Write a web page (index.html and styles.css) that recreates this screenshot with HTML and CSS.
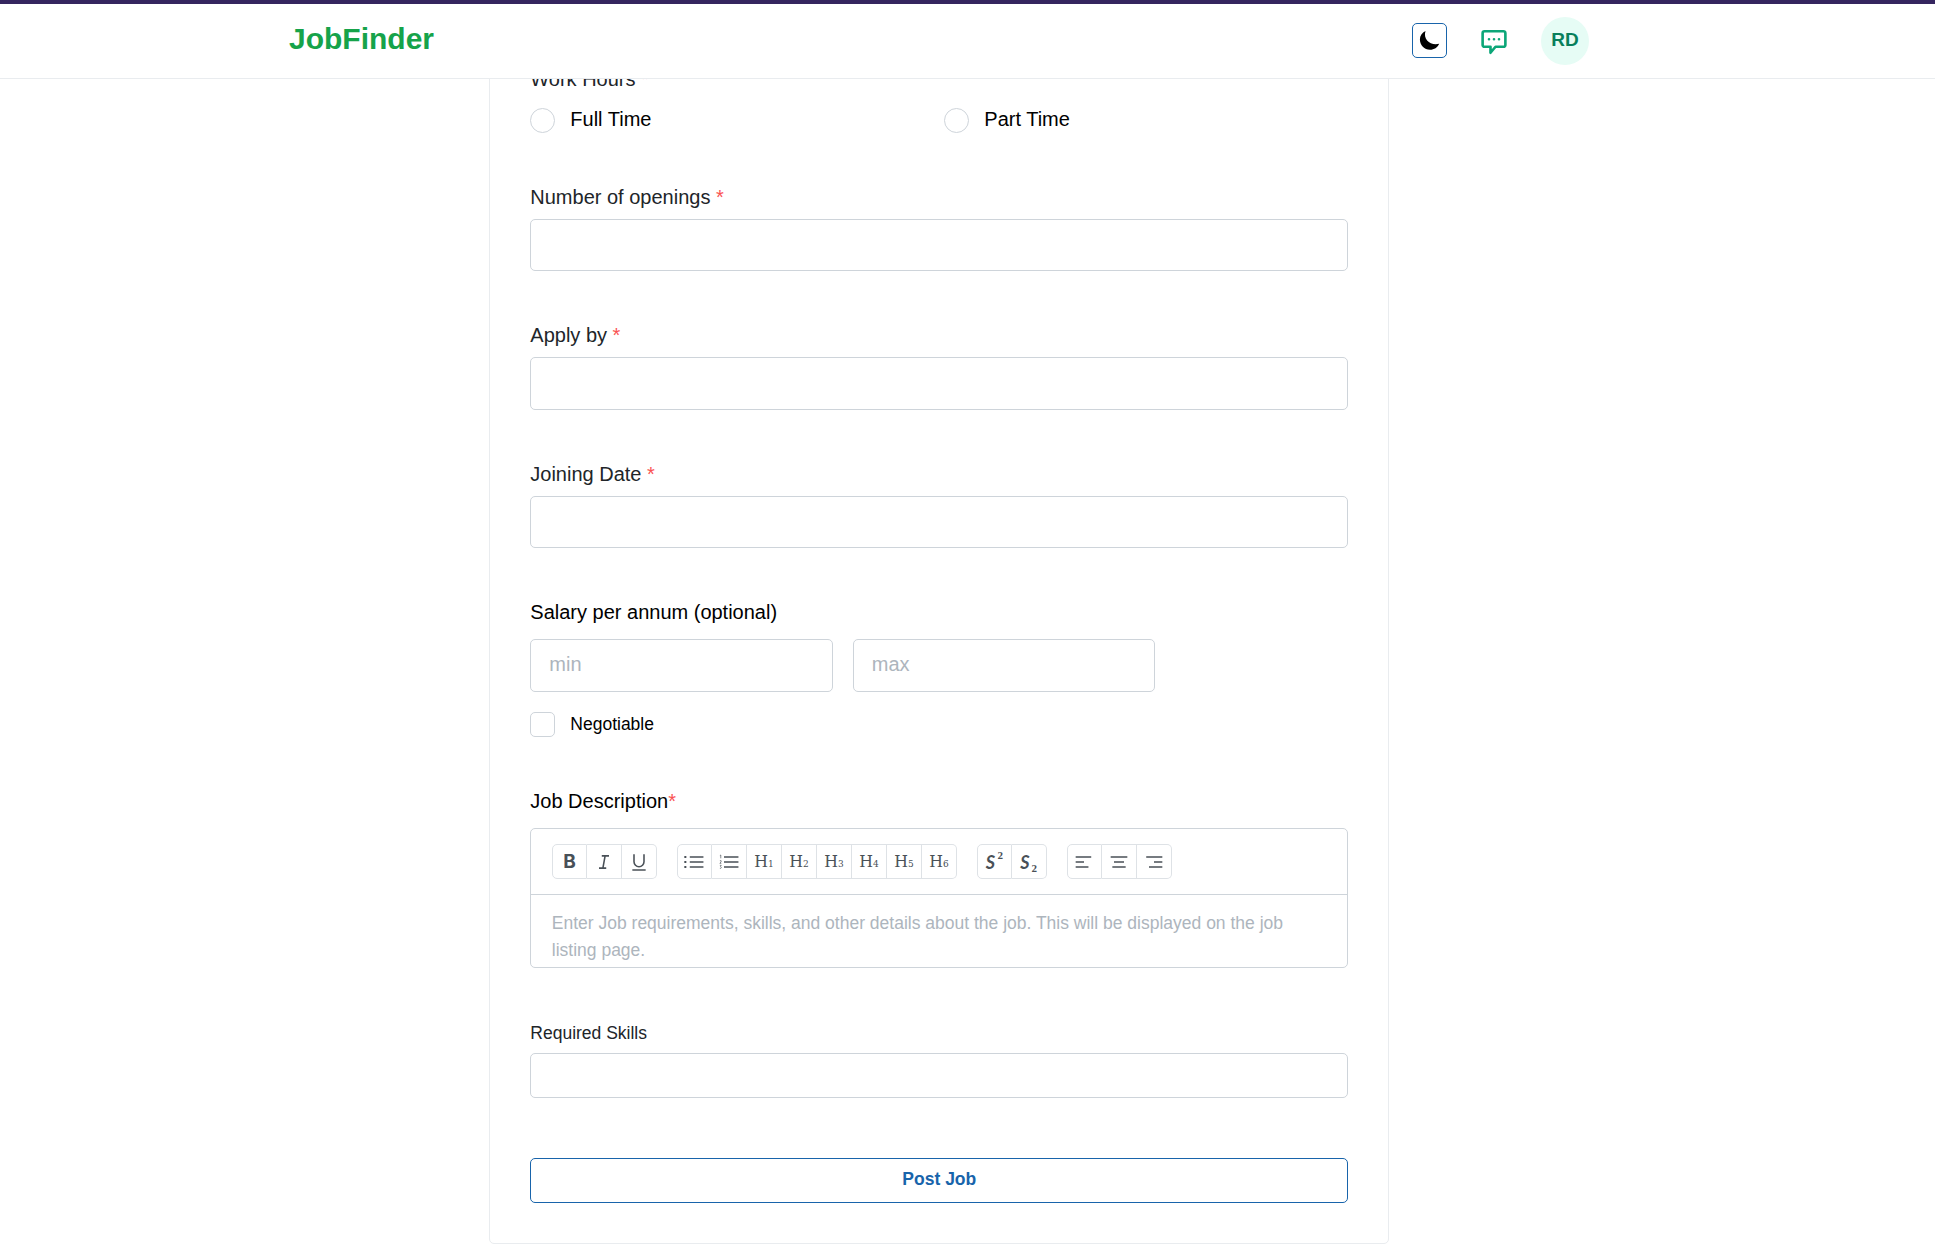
FILE: index.html
```html
<!DOCTYPE html>
<html lang="en">
<head>
<meta charset="utf-8">
<title>JobFinder</title>
<link rel="stylesheet" href="styles.css">
</head>
<body>
<header class="header">
  <a class="logo">JobFinder</a>
  <div class="actions">
    <button class="theme" aria-label="Theme"><svg width="21" height="21" viewBox="0 0 21 21"><path d="M6.500 1C3 2.600.900 5.700.900 9.500c0 5.600 4.500 10.300 10.100 10.300 4.200 0 7.600-2.300 9.200-6C12 16 3.700 10 6.500 1z"/></svg></button>
    <svg class="chat" width="30" height="30" viewBox="0 0 24 24" fill="none" stroke="#0ca678" stroke-width="2.100" stroke-linecap="round" stroke-linejoin="round"><path d="M4.400 3.400h15.200a1.500 1.500 0 0 1 1.500 1.500v9.400a1.500 1.500 0 0 1-1.500 1.500H13.200l-4 4.800v-4.800H4.400a1.500 1.500 0 0 1-1.500-1.500V4.900a1.500 1.500 0 0 1 1.500-1.500zM8 9.800v.01M12 9.800v.01M16 9.800v.01"/></svg>
    <div class="avatar">RD</div>
  </div>
</header>
<main class="card">
  <section class="field hours">
    <div class="label">Work Hours <span class="req">*</span></div>
    <div class="radios">
      <label class="choice"><span class="radio"></span>Full Time</label>
      <label class="choice"><span class="radio"></span>Part Time</label>
    </div>
  </section>
  <section class="field"><div class="label">Number of openings <span class="req">*</span></div><input class="input"></section>
  <section class="field"><div class="label">Apply by <span class="req">*</span></div><input class="input"></section>
  <section class="field"><div class="label">Joining Date <span class="req">*</span></div><input class="input"></section>
  <section class="field salary">
    <div class="label dark">Salary per annum (optional)</div>
    <div class="range"><input class="input" placeholder="min"><input class="input" placeholder="max"></div>
    <label class="choice small"><span class="check"></span>Negotiable</label>
  </section>
  <section class="field description">
    <div class="label dark">Job Description<span class="req">*</span></div>
    <div class="editor">
      <div class="toolbar">
        <div class="group">
          <button class="bold">B</button>
          <button><svg viewBox="0 0 18 18"><path d="M7 3.500h6.500M4.500 14.500h6.500M8 14.500l2-11"/></svg></button>
          <button><svg viewBox="0 0 18 18"><path d="M4.500 2v6.800a4.500 4.500 0 0 0 9 0V2M3 16.200h12"/></svg></button>
        </div>
        <div class="group">
          <button><svg viewBox="0 0 18 18"><path d="M5.200 4.500h12.300M5.200 9h12.300M5.200 13.500h12.300"/><path class="dots" d="M1.200 4.500h.01M1.200 9h.01M1.200 13.500h.01"/></svg></button>
          <button><svg viewBox="0 0 18 18"><path d="M4.500 4.500h13M4.500 9h13M4.500 13.500h13"/><path class="nums" d="M.8 3.200l.8-.5v3M.8 7.800h1.100v1l-1.100 1.400h1.300M.8 12h1.200l-.6 1 .7.800-.5.900H.8"/></svg></button>
          <button class="head">H<small>1</small></button>
          <button class="head">H<small>2</small></button>
          <button class="head">H<small>3</small></button>
          <button class="head">H<small>4</small></button>
          <button class="head">H<small>5</small></button>
          <button class="head">H<small>6</small></button>
        </div>
        <div class="group">
          <button class="script"><b>S</b><small class="sup">2</small></button>
          <button class="script"><b>S</b><small class="sub">2</small></button>
        </div>
        <div class="group">
          <button><svg viewBox="0 0 18 18"><path d="M1.500 4.500h14M1.500 9h7.500M1.500 13.500h11.500"/></svg></button>
          <button><svg viewBox="0 0 18 18"><path d="M1.500 4.500h15M4.500 9h9M3 13.500h12"/></svg></button>
          <button><svg viewBox="0 0 18 18"><path d="M2 4.500h14.500M9 9h7.500M4.500 13.500h12"/></svg></button>
        </div>
      </div>
      <div class="content">Enter Job requirements, skills, and other details about the job. This will be displayed on the job listing page.</div>
    </div>
  </section>
  <section class="field skills"><div class="label">Required Skills</div><input class="input"></section>
  <button class="submit">Post Job</button>
</main>
</body>
</html>
```
FILE: styles.css
```css
* { box-sizing: border-box; }
body { margin: 0; height: 1250px; overflow: hidden; background: #fff; color: #000; font: 20px/31px "Liberation Sans", Arial, sans-serif; }
button, input { font: inherit; margin: 0; background: #fff; padding: 0; }
.header { height: 79px; border-top: 4px solid #35255f; border-bottom: 1px solid #e9ecef; background: #fff; padding: 0 346px 0 289px; display: flex; justify-content: space-between; position: relative; z-index: 1; }
.logo { font-size: 30px; font-weight: 700; line-height: 46px; padding-top: 12px; color: #16a34a; }
.actions { display: flex; align-items: center; }
.theme { width: 35px; height: 35px; margin-bottom: 1px; border: 1px solid #1864ab; border-radius: 5px; display: grid; place-items: center; }
.chat { margin: 1px 32px 0 32px; }
.avatar { width: 48px; height: 48px; border-radius: 50%; background: #e6fcf5; color: #087f5b; font-size: 19px; font-weight: 700; display: grid; place-items: center; padding-bottom: 3px; }
.card { width: 900px; height: 1186px; margin: -21px 0 0 489.3px; border: 1px solid #e9ecef; border-radius: 5px; padding: 5px 40px 0; display: flex; flex-direction: column; }
.field { height: 138.4px; flex: none; }
.label { color: #212529; height: 37px; }
.label.dark { color: #000; }
.req { color: #fa5252; }
.hours { height: 117.9px; }
.radios { display: grid; grid-template-columns: 1fr 1fr; column-gap: 10px; padding-top: 7px; }
.choice { display: flex; gap: 15px; line-height: 22px; height: 25px; }
.small { font-size: 17.5px; line-height: 24px; }
.radio, .check { width: 25px; height: 25px; border: 1px solid #ced4da; border-radius: 5px; }
.radio { border-radius: 50%; }
.input { display: block; width: 100%; height: 52.5px; border: 1px solid #ced4da; border-radius: 5px; padding: 0 18px 2px; }
.input::placeholder { color: #adb5bd; opacity: 1; }
.salary { height: 189px; }
.salary .label { height: 42px; }
.range { display: grid; grid-template-columns: 302.5px 302.5px; gap: 20px; margin-bottom: 20px; }
.description { height: 236px; }
.description .label { height: 42px; }
.editor { height: 140px; border: 1px solid #ced4da; border-radius: 5px; }
.toolbar { height: 66px; border-bottom: 1px solid #ced4da; padding: 15px 20.7px; display: flex; gap: 20px; }
.group { display: flex; height: 35px; }
.group button { width: 35px; height: 35px; border: 1px solid #dee2e6; border-left-width: 0; color: #495057; display: flex; justify-content: center; align-items: center; }
.group button:first-child { border-left-width: 1px; border-radius: 5px 0 0 5px; }
.group button:last-child { border-radius: 0 5px 5px 0; }
.group svg { width: 20px; height: 20px; fill: none; stroke: #495057; stroke-width: 1.4; }
.group .dots { stroke-width: 1.8; stroke-linecap: square; }
.group .nums { stroke-width: .6; }
.group .bold { font: 700 19px/20px Inter, sans-serif; }
.group .head { font: 17.5px/20px "DejaVu Serif Condensed", "DejaVu Serif", serif; font-stretch: condensed; align-items: baseline; padding-top: 6px; }
.head small { font-size: 10px; }
.group .script { position: relative; font: italic 18px/20px Lato, sans-serif; padding-right: 8px; }
.script small { position: absolute; left: 19.5px; font: 700 11px/11px "Liberation Serif", serif; }
.script .sup { top: 5px; }
.script .sub { top: 18px; }
.content { font-size: 17.5px; line-height: 27px; color: #adb5bd; padding: 15px 20.5px 0; }
.skills { height: 136px; font-size: 17.5px; }
.skills .label { height: 31px; line-height: 22px; }
.skills .input { height: 45px; }
.submit { height: 45px; width: 100%; flex: none; border: 1px solid #1864ab; border-radius: 5px; color: #1864ab; font-size: 17.5px; font-weight: 700; padding-bottom: 2px; }
```
